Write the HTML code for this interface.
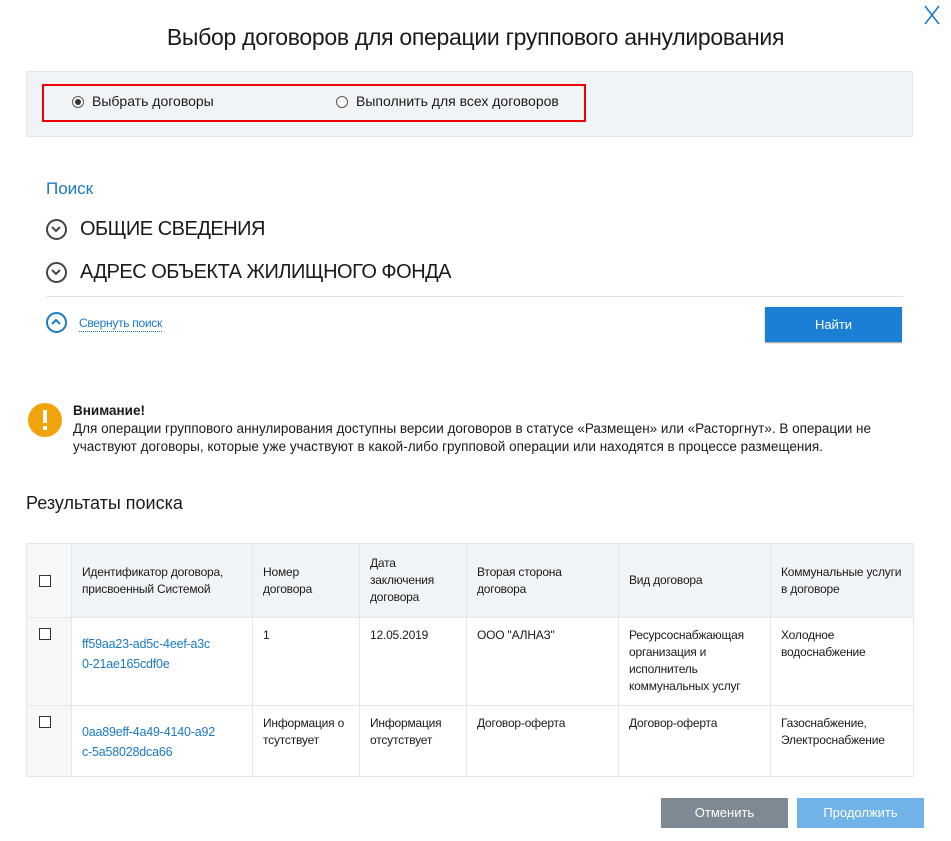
<!DOCTYPE html>
<html><head><meta charset="utf-8"><style>
*{box-sizing:border-box;margin:0;padding:0}
body{width:951px;height:841px;background:#fff;font-family:"Liberation Sans Narrow","Liberation Sans",sans-serif;color:#1a1a1a;position:relative;overflow:hidden}
.a{position:absolute;white-space:nowrap}
.t{font-size:23px;left:0;width:951px;text-align:center;top:24px;letter-spacing:-0.3px}
.panel{left:26px;top:71px;width:887px;height:66px;background:#f1f4f7;border:1px solid #e3e6ea}
.red{left:42px;top:84px;width:544px;height:38px;border:2px solid #e00}
.rad{width:12px;height:12px;border:1px solid #555;border-radius:50%;background:#fff}
.f14{font-size:14px}
.sec{left:80px;letter-spacing:-0.5px}
.ci{width:21px;height:21px;border:2.5px solid #444;border-radius:50%}
table{position:absolute;left:26px;top:543px;width:888px;border-collapse:collapse;font-size:12px;line-height:17px;letter-spacing:-0.2px}
td{border:1px solid #e3e7eb;vertical-align:top;padding:0 8px 0 10px}
thead td{background:#f1f4f7;vertical-align:middle;height:74px}
.c0{background:#f5f7f9;width:45px;padding:0 0 0 12px}
.cb{width:12px;height:12px;border:1px solid #333;background:#fff;display:block}
a{color:#1a7ac6;text-decoration:none}
.btn{position:absolute;color:#fff;font-size:14px;text-align:center}
</style></head><body>
<svg class="a" style="left:923px;top:5px" width="18" height="20"><path d="M2 1L16 19M16 1L2 19" stroke="#1a7ac6" stroke-width="1.5" fill="none"/></svg>
<div class="a t">Выбор договоров для операции группового аннулирования</div>
<div class="a panel"></div>
<div class="a red"></div>
<div class="a rad" style="left:72px;top:96px"><div style="width:6px;height:6px;border-radius:50%;background:#333;margin:2px"></div></div>
<div class="a f14" style="left:92px;top:93px">Выбрать договоры</div>
<div class="a rad" style="left:336px;top:96px"></div>
<div class="a f14" style="left:356px;top:93px">Выполнить для всех договоров</div>
<div class="a" style="left:46px;top:179px;font-size:17px;color:#1a7ac6">Поиск</div>
<div class="a ci" style="left:46px;top:219px"><svg width="16" height="16"><path d="M4 6L8 10L12 6" stroke="#444" stroke-width="2" fill="none"/></svg></div>
<div class="a sec" style="top:218px;font-size:20px">ОБЩИЕ СВЕДЕНИЯ</div>
<div class="a ci" style="left:46px;top:262px"><svg width="16" height="16"><path d="M4 6L8 10L12 6" stroke="#444" stroke-width="2" fill="none"/></svg></div>
<div class="a sec" style="top:261px;font-size:20px">АДРЕС ОБЪЕКТА ЖИЛИЩНОГО ФОНДА</div>
<div class="a" style="left:46px;top:296px;width:857px;height:1px;background:#dfe2e5"></div>
<div class="a ci" style="left:46px;top:312px;border-color:#1a7ac6"><svg width="16" height="16"><path d="M4 10L8 6L12 10" stroke="#1a7ac6" stroke-width="2" fill="none"/></svg></div>
<div class="a" style="left:79px;top:315px;font-size:12px;color:#1a7ac6;border-bottom:1px dotted #1a7ac6;line-height:16px;letter-spacing:-0.3px">Свернуть поиск</div>
<div class="btn" style="left:765px;top:307px;width:137px;height:35px;background:#1b7fd6;line-height:35px;box-shadow:0 1px 1px #999;font-size:13px">Найти</div>
<svg class="a" style="left:28px;top:403px" width="34" height="34"><circle cx="17" cy="17" r="17" fill="#f0a30a"/><rect x="15" y="7" width="4" height="13" fill="#fff"/><rect x="15" y="23" width="4" height="4" fill="#fff"/></svg>
<div class="a" style="left:73px;top:402px;line-height:18px;white-space:normal;width:860px;font-size:13.5px"><b>Внимание!</b><br>Для операции группового аннулирования доступны версии договоров в статусе «Размещен» или «Расторгнут». В операции не участвуют договоры, которые уже участвуют в какой-либо групповой операции или находятся в процессе размещения.</div>
<div class="a" style="left:26px;top:493px;font-size:18px">Результаты поиска</div>
<table>
<thead><tr><td class="c0"><span class="cb"></span></td><td style="width:181px">Идентификатор договора, присвоенный Системой</td><td style="width:107px">Номер договора</td><td style="width:107px">Дата заключения договора</td><td style="width:152px">Вторая сторона договора</td><td style="width:152px">Вид договора</td><td>Коммунальные услуги<br>в договоре</td></tr></thead>
<tr style="height:88px"><td class="c0" style="padding-top:10px"><span class="cb"></span></td><td style="padding-top:16px;font-size:12.5px;line-height:20px"><a>ff59aa23-ad5c-4eef-a3c<br>0-21ae165cdf0e</a></td><td style="padding-top:9px">1</td><td style="padding-top:9px">12.05.2019</td><td style="padding-top:9px">ООО "АЛНАЗ"</td><td style="padding-top:9px">Ресурсоснабжающая организация и исполнитель коммунальных услуг</td><td style="padding-top:9px">Холодное водоснабжение</td></tr>
<tr style="height:71px"><td class="c0" style="padding-top:10px"><span class="cb"></span></td><td style="padding-top:16px;font-size:12.5px;line-height:20px"><a>0aa89eff-4a49-4140-a92<br>c-5a58028dca66</a></td><td style="padding-top:9px">Информация о<br>тсутствует</td><td style="padding-top:9px">Информация отсутствует</td><td style="padding-top:9px">Договор-оферта</td><td style="padding-top:9px">Договор-оферта</td><td style="padding-top:9px">Газоснабжение, Электроснабжение</td></tr>
</table>
<div class="btn" style="left:661px;top:798px;width:127px;height:30px;background:#7d8a94;line-height:30px;font-size:13px">Отменить</div>
<div class="btn" style="left:797px;top:798px;width:127px;height:30px;background:#6fb3e8;line-height:30px;font-size:13px">Продолжить</div>
</body></html>
